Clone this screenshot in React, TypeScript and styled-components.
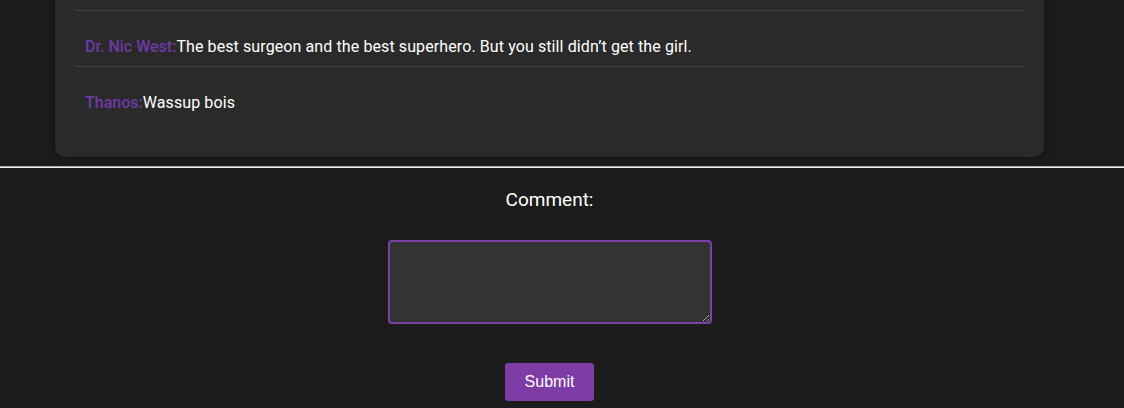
import React from "react";
import styled, { createGlobalStyle } from "styled-components";

const Global = createGlobalStyle`
  html, body { margin: 0; padding: 0; background: #1c1c1c; overflow: hidden; }
  body { font-family: Roboto, "Liberation Sans", sans-serif; color: #fff; }
`;

const Page = styled.div`
  width: 1099px;
  display: flex;
  flex-direction: column;
  align-items: center;
`;

const FullWidth = styled.div`
  width: 1124px;
  display: flex;
  flex-direction: column;
`;

const Card = styled.section`
  box-sizing: border-box;
  width: 989px;
  margin: -40px auto 0;
  padding: 50px 20px 35px;
  background: #2a2a2a;
  border-radius: 10px;
  box-shadow: 0 2px 10px rgba(0, 0, 0, 0.35);
  display: flex;
  flex-direction: column;
`;

const Row = styled.div`
  border-top: 1px solid #444;
  padding: 26px 10px 10px;
  font-size: 16px;
  line-height: 19px;
  height: 19px;
`;

const Author = styled.span`
  color: #6d3aa5;
  font-weight: 500;
`;

const Body = styled.span`
  color: #fff;
  letter-spacing: 0.1px;
`;

const Rule = styled.hr`
  width: 100%;
  margin: 9px 0 0;
  border: none;
  border-top: 1px solid #a9a9a9;
  border-bottom: 1px solid #f0f0f0;
  height: 0;
`;

const Form = styled.form`
  width: 1099px;
  display: flex;
  flex-direction: column;
  align-items: center;
`;

const Label = styled.label`
  margin-top: 21px;
  font-size: 19px;
  line-height: 22px;
  font-weight: 400;
  color: #fff;
`;

const TextArea = styled.textarea`
  box-sizing: border-box;
  margin-top: 29px;
  width: 324px;
  height: 84px;
  background: #333;
  border: 2px solid #7b3fa8;
  border-radius: 4px;
  color: #fff;
  outline: none;
  padding: 6px;
  font-family: Roboto, sans-serif;
`;

const Submit = styled.button`
  margin-top: 39px;
  width: 89px;
  height: 38px;
  background: #7d3ca6;
  border: none;
  border-radius: 3px;
  color: #fff;
  font-family: "Liberation Sans", Arial, sans-serif;
  font-size: 16px;
  cursor: pointer;
`;

const comments = [
  { author: "Dr. Nic West", text: "The best surgeon and the best superhero. But you still didn’t get the girl." },
  { author: "Thanos", text: "Wassup bois" },
];

export default function App() {
  return (
    <FullWidth>
      <Global />
      <Page>
        <Card>
          {comments.map((c) => (
            <Row key={c.author}>
              <Author>{c.author}:</Author>
              <Body>{c.text}</Body>
            </Row>
          ))}
        </Card>
      </Page>
      <Rule />
      <Form onSubmit={(e) => e.preventDefault()}>
        <Label htmlFor="comment">Comment:</Label>
        <TextArea id="comment" />
        <Submit type="submit">Submit</Submit>
      </Form>
    </FullWidth>
  );
}
